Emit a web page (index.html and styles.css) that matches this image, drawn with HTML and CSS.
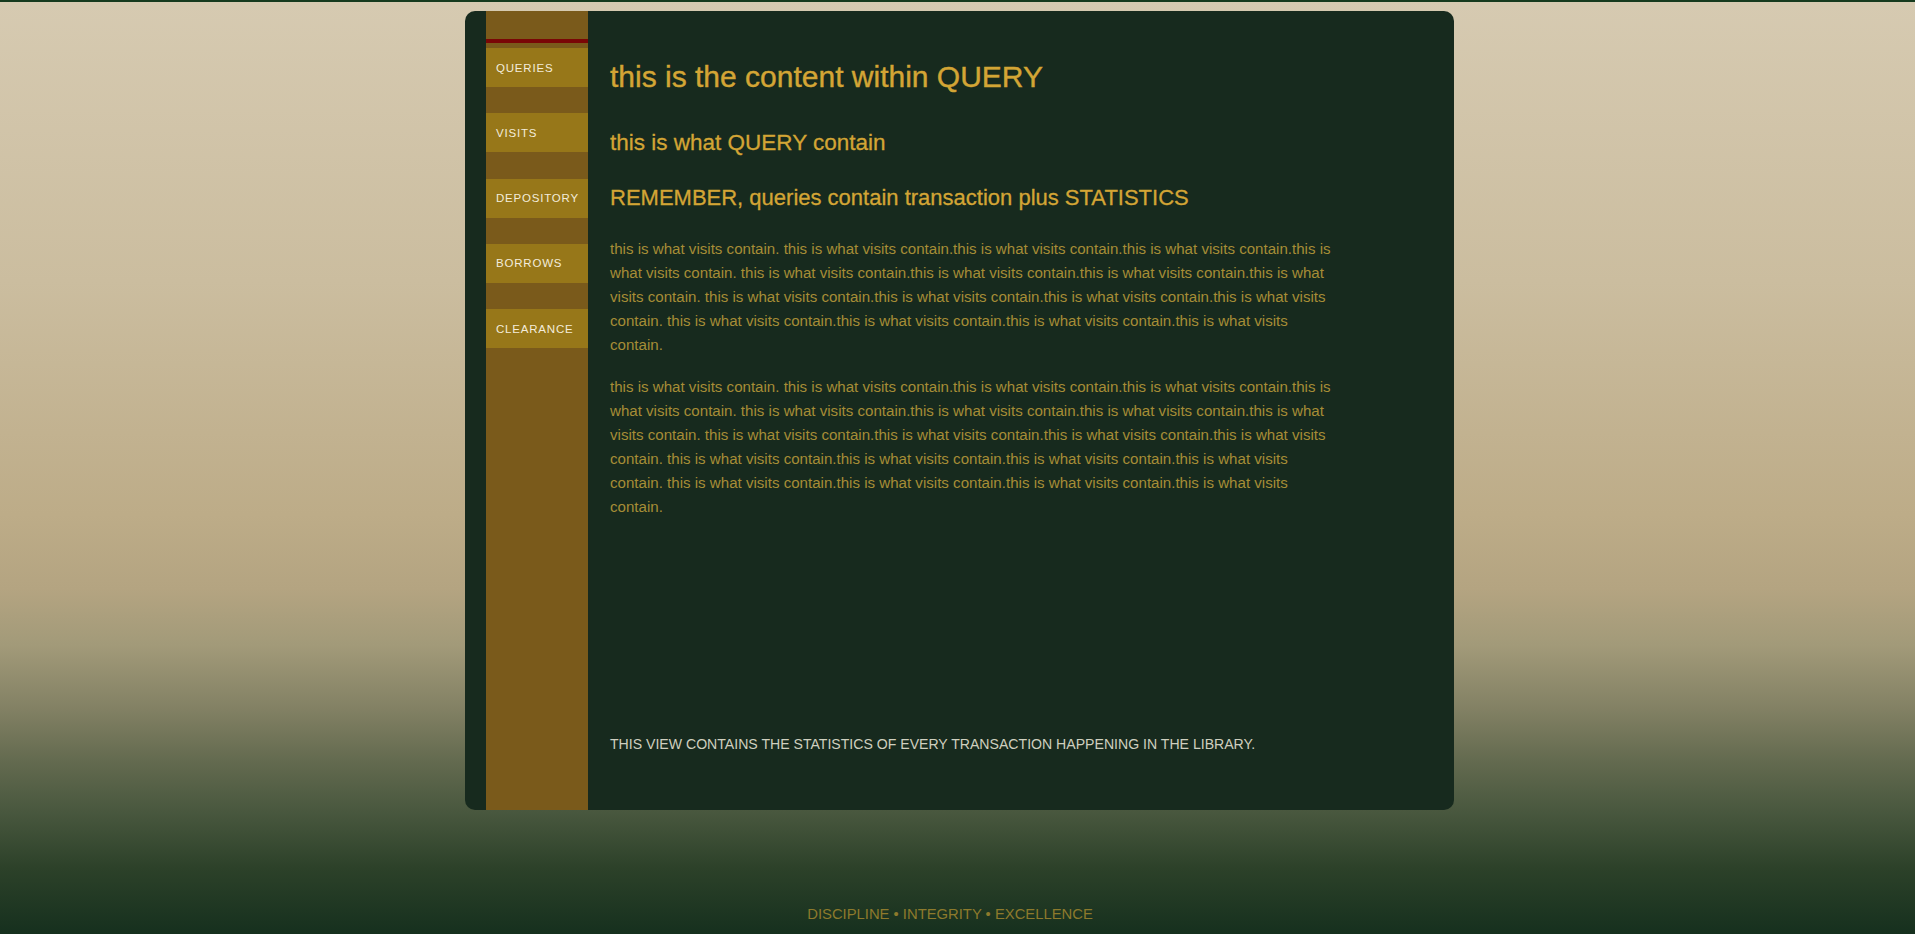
FILE: index.html
```html
<!DOCTYPE html>
<html lang="en">
<head>
<meta charset="utf-8">
<title>Queries</title>
<link rel="stylesheet" href="styles.css">
</head>
<body>
<div class="page">
  <div class="shell">
    <div class="panel">
      <nav class="sidebar">
        <div class="sidebar-top"></div>
        <div class="sidebar-rule"></div>
        <ul class="nav">
          <li class="nav-item">QUERIES</li>
          <li class="nav-item">VISITS</li>
          <li class="nav-item">DEPOSITORY</li>
          <li class="nav-item">BORROWS</li>
          <li class="nav-item">CLEARANCE</li>
        </ul>
      </nav>
      <main class="content">
        <h1 class="title">this is the content within QUERY</h1>
        <h2 class="subtitle">this is what QUERY contain</h2>
        <h3 class="note">REMEMBER, queries contain transaction plus STATISTICS</h3>
        <p class="body-text">this is what visits contain. this is what visits contain.this is what visits contain.this is what visits contain.this is what visits contain. this is what visits contain.this is what visits contain.this is what visits contain.this is what visits contain. this is what visits contain.this is what visits contain.this is what visits contain.this is what visits contain. this is what visits contain.this is what visits contain.this is what visits contain.this is what visits contain.</p>
        <p class="body-text second">this is what visits contain. this is what visits contain.this is what visits contain.this is what visits contain.this is what visits contain. this is what visits contain.this is what visits contain.this is what visits contain.this is what visits contain. this is what visits contain.this is what visits contain.this is what visits contain.this is what visits contain. this is what visits contain.this is what visits contain.this is what visits contain.this is what visits contain. this is what visits contain.this is what visits contain.this is what visits contain.this is what visits contain.</p>
        <p class="statement">THIS VIEW CONTAINS THE STATISTICS OF EVERY TRANSACTION HAPPENING IN THE LIBRARY.</p>
      </main>
    </div>
  </div>
  <footer class="motto">DISCIPLINE • INTEGRITY • EXCELLENCE</footer>
</div>
</body>
</html>
```
FILE: styles.css
```css
html, body {
  margin: 0;
  padding: 0;
}

body {
  font-family: "Liberation Sans", Arial, sans-serif;
}

.page {
  min-height: 100vh;
  box-sizing: border-box;
  border-top: 2px solid #163a1e;
  background: linear-gradient(to bottom,
    #d6cab1 0%,
    #cbbd9f 30%,
    #bdac88 55%,
    #b4a481 63%,
    #a29a79 69%,
    #848265 75.5%,
    #636a4f 81.5%,
    #48573e 87%,
    #2c4129 93%,
    #16301e 100%);
  overflow: hidden;
}

.shell {
  display: flex;
  justify-content: center;
  padding-left: 4px;
  padding-top: 9px;
}

.panel {
  width: 989px;
  height: 799px;
  box-sizing: border-box;
  padding-left: 21px;
  background: #172a1e;
  border-radius: 10px;
  display: flex;
}

.sidebar {
  width: 102px;
  flex: none;
  background: #7a5a1b;
  display: flex;
  flex-direction: column;
}

.sidebar-top {
  height: 28px;
}

.sidebar-rule {
  height: 4px;
  background: #7a0606;
}

.nav {
  list-style: none;
  margin: 5px 0 0;
  padding: 0;
  display: flex;
  flex-direction: column;
  gap: 26.3px;
}

.nav-item {
  height: 39px;
  display: flex;
  align-items: center;
  padding-left: 10px;
  background: #977719;
  color: #f3ecdb;
  font-size: 11.5px;
  letter-spacing: 0.8px;
}

.content {
  flex: 1;
  box-sizing: border-box;
  padding: 48px 17px 56px 22px;
  display: flex;
  flex-direction: column;
  align-items: flex-start;
}

.title {
  margin: 0;
  font-size: 30px;
  line-height: 36px;
  font-weight: normal;
  color: #d3a535;
  -webkit-text-stroke: 0.4px #d3a535;
}

.subtitle {
  margin: 34px 0 0;
  font-size: 22.5px;
  line-height: 28px;
  font-weight: normal;
  color: #d3a535;
  -webkit-text-stroke: 0.3px #d3a535;
}

.note {
  margin: 27px 0 0;
  font-size: 22px;
  line-height: 28px;
  font-weight: normal;
  color: #d3a535;
  -webkit-text-stroke: 0.3px #d3a535;
}

.body-text {
  margin: 25px 0 0;
  max-width: 728px;
  font-size: 15.1px;
  line-height: 24px;
  color: #a68d36;
}

.body-text.second {
  margin-top: 18px;
}

.statement {
  margin: auto 0 0;
  font-size: 14.1px;
  line-height: 20px;
  color: #cfcfbf;
}

.motto {
  margin-top: 95px;
  padding-right: 15px;
  text-align: center;
  font-size: 14.8px;
  line-height: 18px;
  color: #8d7a2c;
}
```
